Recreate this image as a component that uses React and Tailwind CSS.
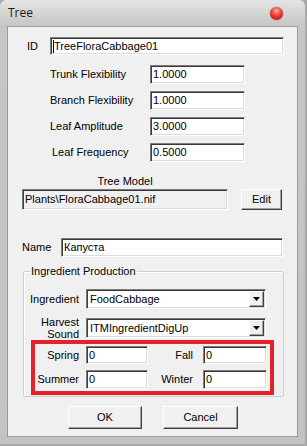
import React from 'react';

const sunken =
  'border border-t-[#7c7c7c] border-l-[#7c7c7c] border-b-white border-r-white shadow-[inset_1px_1px_0_#3a3a3a,inset_-1px_-1px_0_#dcdcdc] bg-white px-[2px] outline-none text-black';
const raised =
  'border border-t-white border-l-white border-b-[#404040] border-r-[#404040] shadow-[inset_-1px_-1px_0_#a0a0a0] bg-[#f0f0f0] flex items-center justify-center';

function Field({ value, className = '', caret = false }) {
  return (
    <div className={`${sunken} flex items-center ${className}`}>
      {caret && <span className="w-px h-[13px] bg-black" />}
      <span className="leading-none">{value}</span>
    </div>
  );
}

function Combo({ value }) {
  return (
    <div className={`${sunken} flex items-center justify-between w-[180px] h-[20px] pr-[1px]`}>
      <span className="pl-[1px]">{value}</span>
      <div className={`${raised} w-[15px] h-[16px]`}>
        <svg width="7" height="4" viewBox="0 0 7 4">
          <polygon points="0,0 7,0 3.5,4" fill="#000" />
        </svg>
      </div>
    </div>
  );
}

function ParamRow({ label, value, first = false, indent = false }) {
  return (
    <div className={`flex items-center h-[19px] ${first ? 'mt-[10px]' : 'mt-[7px]'} ${indent ? 'ml-[45px]' : 'ml-[43px]'}`}>
      <span className={indent ? 'w-[98px]' : 'w-[100px]'}>{label}</span>
      <Field value={value} className="w-[95px] h-[19px]" />
    </div>
  );
}

export default function App() {
  return (
    <div className="w-[307px] h-[446px] bg-[#a9a9a9] font-['Liberation_Sans',Arial,sans-serif] text-[11px] text-black">
      <div className="w-[305px] h-[444px] bg-[linear-gradient(#e4e4e4,#c6c6c6_26px,#c3c3c3)] rounded-t-[6px] flex flex-col px-[7px] pb-[7px]">
        {/* title bar */}
        <div className="h-[26px] flex items-center justify-between">
          <span className="text-[12px] pl-[1px] pb-[1px] font-['Open_Sans',sans-serif] text-[#1a1a1a]">Tree</span>
          <div className="w-[13px] h-[13px] rounded-full mr-[15px] bg-[radial-gradient(circle_at_50%_30%,#ffb0a8,#ee3a2e_45%,#b01010)] shadow-[0_0_1px_#700]" />
        </div>

        {/* client area */}
        <div className="flex-1 bg-[#f0f0f0] shadow-[inset_0_0_0_1px_#9a9a9a] flex flex-col">
          <div className="flex items-center h-[18px] mt-[11px]">
            <span className="ml-[20px] w-[23px]">ID</span>
            <Field value="TreeFloraCabbage01" caret className="w-[234px] h-[18px]" />
          </div>

          <ParamRow label="Trunk Flexibility" value="1.0000" first />
          <ParamRow label="Branch Flexibility" value="1.0000" />
          <ParamRow label="Leaf Amplitude" value="3.0000" />
          <ParamRow label="Leaf Frequency" value="0.5000" indent />

          <div className="ml-[15px] w-[206px] mt-[12px] h-[14px] text-center leading-[14px]">Tree Model</div>
          <div className="flex items-center mt-[1px]">
            <Field value="Plants\FloraCabbage01.nif" className="ml-[15px] w-[206px] h-[21px] !bg-[#f0f0f0]" />
            <button className={`${raised} ml-[13px] w-[41px] h-[21px]`}>Edit</button>
          </div>

          <div className="flex items-center mt-[28px] h-[19px]">
            <span className="ml-[15px] w-[39px]">Name</span>
            <Field value="Капуста" className="w-[222px] h-[19px]" />
          </div>

          <fieldset className="ml-[16px] mt-[8px] w-[261px] h-[132px] border border-[#cfcfcf] shadow-[inset_1px_1px_0_#fff] rounded-[2px]">
            <legend className="ml-[6px] px-[1px] leading-[13px]">Ingredient Production</legend>
            <div className="flex items-center mt-[11px] h-[20px]">
              <span className="w-[55px] text-right">Ingredient</span>
              <div className="ml-[7px]">
                <Combo value="FoodCabbage" />
              </div>
            </div>
            <div className="flex items-center mt-[9px] h-[20px]">
              <span className="w-[55px] text-right leading-[12px]">
                Harvest
                <br />
                Sound
              </span>
              <div className="ml-[7px]">
                <Combo value="ITMIngredientDigUp" />
              </div>
            </div>

            {/* highlighted seasons block */}
            <div className="ml-[7px] mt-[2px] w-[243px] h-[55px] border-[4px] border-[#e3222b]">
              <div className="flex items-center mt-[2px] h-[18px]">
                <span className="w-[44px] text-right">Spring</span>
                <Field value="0" className="ml-[7px] w-[62px] h-[18px]" />
                <span className="w-[45px] text-right">Fall</span>
                <Field value="0" className="ml-[10px] w-[64px] h-[18px]" />
              </div>
              <div className="flex items-center mt-[6px] h-[19px]">
                <span className="w-[44px] text-right">Summer</span>
                <Field value="0" className="ml-[7px] w-[62px] h-[19px]" />
                <span className="w-[45px] text-right">Winter</span>
                <Field value="0" className="ml-[10px] w-[64px] h-[19px]" />
              </div>
            </div>
          </fieldset>

          <div className="flex mt-[9px]">
            <button className={`${raised} ml-[61px] w-[74px] h-[23px]`}>OK</button>
            <button className={`${raised} ml-[21px] w-[75px] h-[23px]`}>Cancel</button>
          </div>
        </div>
      </div>
    </div>
  );
}
